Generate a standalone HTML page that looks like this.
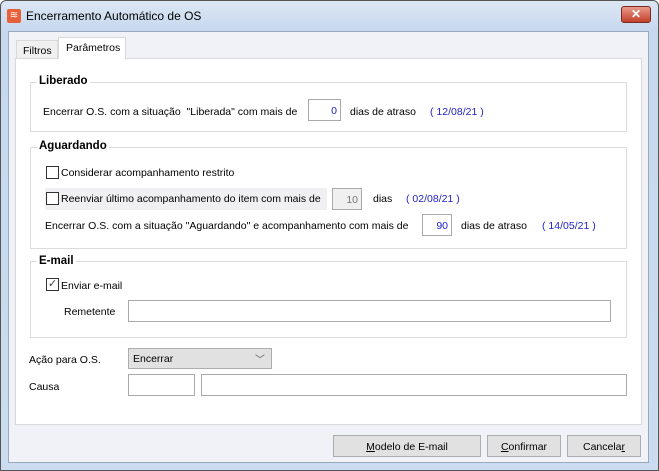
<!DOCTYPE html>
<html><head><meta charset="utf-8"><style>
*{box-sizing:border-box;margin:0;padding:0}
body{width:659px;height:471px;position:relative;overflow:hidden;font-family:"Liberation Sans",sans-serif;font-size:10.5px;color:#000;background:#fff}
.a{position:absolute;white-space:nowrap}
.win{left:0;top:0;width:659px;height:471px;border:1px solid #555;border-radius:6px 6px 0 0;background:linear-gradient(#dce7f4,#c6d8ee 30px,#cbdcf0)}
.client{left:8px;top:31px;width:641px;height:432px;background:#f1f2f7;border:1px solid #9ab}
.tabp{left:15px;top:58px;width:627px;height:367px;background:#fff;border:1px solid #d9d9d9}
.grp{position:absolute;border:1px solid #dcdcdc}
.lg{position:absolute;background:#fff;font-weight:bold;font-size:11.5px;padding:0 2px}
.in{position:absolute;border:1px solid #a9a9a9;background:#fff;height:22px;text-align:right;padding:5px 3px 0 0;color:#1a1acc}
.blue{color:#2323c8}
.cb{position:absolute;width:13px;height:13px;border:1px solid #333;background:#fff}
.btn{position:absolute;top:435px;height:22px;border:1px solid #adadad;background:#e1e1e1;text-align:center;padding-top:5px}
</style></head><body>
<div class="a win"></div>
<div class="a" style="left:7px;top:9px;width:14px;height:14px;background:#e8603a;border-radius:2px;color:#fff;font-size:10px;line-height:14px;text-align:center">≋</div>
<div class="a" style="left:26px;top:9px;font-size:12px">Encerramento Automático de OS</div>
<div class="a" style="left:621px;top:6px;width:30px;height:17px;border:1px solid #7a2a20;border-radius:3px;background:linear-gradient(#e89a88,#c3402c);color:#fff;font-weight:bold;text-align:center;font-size:12px;line-height:15px">✕</div>
<div class="a client"></div>
<div class="a" style="left:16px;top:40px;width:42px;height:19px;border:1px solid #d9d9d9;background:#f0f0f0;padding:4px 0 0 6px">Filtros</div>
<div class="a tabp"></div>
<div class="a" style="left:58px;top:37px;width:68px;height:22px;border:1px solid #d9d9d9;border-bottom:none;background:#fff;padding:4px 0 0 7px">Parâmetros</div>

<div class="grp" style="left:30px;top:82px;width:597px;height:50px"></div>
<div class="lg" style="left:37px;top:75px">Liberado</div>
<div class="a" style="left:43px;top:106px">Encerrar O.S. com a situação &nbsp;"Liberada" com mais de</div>
<div class="in" style="left:308px;top:99px;width:33px">0</div>
<div class="a" style="left:350px;top:106px">dias de atraso</div>
<div class="a blue" style="left:430px;top:106px">( 12/08/21 )</div>

<div class="grp" style="left:30px;top:147px;width:597px;height:102px"></div>
<div class="lg" style="left:37px;top:140px">Aguardando</div>
<div class="cb" style="left:46px;top:166px"></div>
<div class="a" style="left:61px;top:167px">Considerar acompanhamento restrito</div>
<div class="a" style="left:45px;top:188px;width:282px;height:22px;background:#f0f0f3"></div>
<div class="cb" style="left:46px;top:192px"></div>
<div class="a" style="left:61px;top:193px">Reenviar último acompanhamento do item com mais de</div>
<div class="in" style="left:332px;top:188px;width:30px;background:#f0f0f0;color:#777">10</div>
<div class="a" style="left:373px;top:193px">dias</div>
<div class="a blue" style="left:406px;top:193px">( 02/08/21 )</div>
<div class="a" style="left:45px;top:220px">Encerrar O.S. com a situação "Aguardando" e acompanhamento com mais de</div>
<div class="in" style="left:422px;top:214px;width:30px">90</div>
<div class="a" style="left:461px;top:220px">dias de atraso</div>
<div class="a blue" style="left:542px;top:220px">( 14/05/21 )</div>

<div class="grp" style="left:30px;top:261px;width:597px;height:77px"></div>
<div class="lg" style="left:37px;top:255px">E-mail</div>
<div class="cb" style="left:46px;top:278px;color:#444;font-size:11px;line-height:11px;text-align:center">✓</div>
<div class="a" style="left:61px;top:280px">Enviar e-mail</div>
<div class="a" style="left:64px;top:306px">Remetente</div>
<div class="in" style="left:128px;top:300px;width:483px"></div>

<div class="a" style="left:29px;top:354px">Ação para O.S.</div>
<div class="a" style="left:128px;top:348px;width:144px;height:21px;border:1px solid #adadad;background:#e1e1e1;padding:4px 0 0 4px">Encerrar<span style="position:absolute;right:6px;top:2px;color:#555;font-size:10px">﹀</span></div>
<div class="a" style="left:29px;top:381px">Causa</div>
<div class="in" style="left:128px;top:374px;width:67px"></div>
<div class="in" style="left:201px;top:374px;width:426px"></div>

<div class="btn" style="left:333px;width:148px"><u>M</u>odelo de E-mail</div>
<div class="btn" style="left:487px;width:74px"><u>C</u>onfirmar</div>
<div class="btn" style="left:567px;width:74px">Cancela<u>r</u></div>
</body></html>
